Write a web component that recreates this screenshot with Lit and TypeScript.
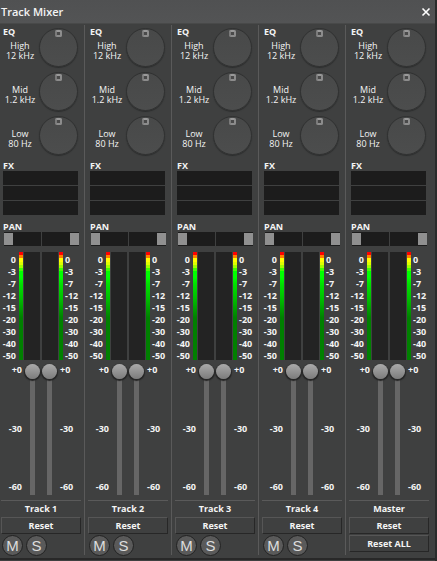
import { LitElement, html, css } from "lit";
import { customElement, property } from "lit/decorators.js";

const METER_LABELS = ["0", "-3", "-7", "-12", "-15", "-20", "-30", "-40", "-50"];
const BANDS = [
  { name: "High", freq: "12 kHz" },
  { name: "Mid", freq: "1.2 kHz" },
  { name: "Low", freq: "80 Hz" },
];

@customElement("mixer-strip")
class MixerStrip extends LitElement {
  @property() name = "";
  @property({ type: Boolean }) master = false;

  static styles = css`
    :host {
      display: flex;
      flex-direction: column;
      box-sizing: border-box;
      padding: 4px 9px 2px 3px;
      position: relative;
      min-width: 0;
    }
    :host(:not([master]))::after {
      content: "";
      position: absolute;
      right: 2px;
      top: 1px;
      bottom: 3px;
      width: 1px;
      background: #5a5a5a;
    }
    * { box-sizing: border-box; }
    input, button { margin: 0; padding: 0; font: inherit; color: inherit; }
    input { appearance: none; background: none; display: block; outline-offset: 1px; }
    h2 { margin: 0; font-size: 9px; line-height: 12px; font-weight: 700; }
    .eq { display: grid; grid-template-columns: 1fr 39px; row-gap: 5px; position: relative; }
    .eq h2 { position: absolute; left: 0; top: -2px; }
    .band { display: contents; }
    .caption { padding: 13px 2px 0 0; height: 39px; text-align: center; font-size: 9px; line-height: 10px; white-space: nowrap; }
    .caption span { display: block; }
    .knob {
      width: 39px; height: 39px; border-radius: 50%;
      background: linear-gradient(#484949, #4c4d4d);
      border: 1px solid #303131;
      box-shadow: 0 1px 1px #2c2d2d;
    }
    .knob::-webkit-slider-runnable-track { height: 37px; }
    .knob::-webkit-slider-thumb {
      appearance: none; width: 7px; height: 7px; margin-top: 1px;
      background: #4a4a4a; border: 2px solid #8c8c8c; border-radius: 2px;
      border-left-color: #7a7a7a; border-top-color: #999;
    }
    .fx { margin-top: 5px; display: flex; flex-direction: column; gap: 1px; }
    .fx h2 { margin-bottom: -2px; }
    .slot { height: 14px; border: 0; background: #1c1c1c; }
    .pan { margin: 6px -1px 0 1px; }
    .pan h2 { margin: 0 0 -1px -1px; }
    .pair { display: grid; grid-template-columns: 1fr 1fr; gap: 1px; }
    .pan input { width: 100%; height: 14px; background: #1c1c1c; }
    .pan input::-webkit-slider-thumb { appearance: none; width: 9px; height: 12px; background: #909090; }
    .meters { margin: 6px -4px 0 -3px; display: grid; grid-template-columns: 1fr auto auto 1fr; column-gap: 2px; }
    .channel { display: grid; grid-template-columns: 4px 16px; column-gap: 1px; }
    .channel.mirror { grid-template-columns: 16px 4px; }
    .bar { background: linear-gradient(#f00 0 3px, #ff8000 3px 6px, #ff0 6px 10px, #e0ff00 10px 13px, #a0ff00 13px 16px, #40ff00 16px 19px, #0f0 19px 25px, #00e000 32px, #00c000 46px, #008000 66px); }
    .well { background: #232323; }
    .scale { font-size: 9px; line-height: 12px; font-weight: 700; padding-top: 2px; height: 108px; }
    .left { text-align: right; padding-right: 1px; }
    .faders { margin: 4px -4px 0 -3px; display: grid; grid-template-columns: 1fr 15px 15px 1fr; column-gap: 2px; height: 131px; }
    .ticks { font-size: 9px; line-height: 12px; font-weight: 700; display: flex; flex-direction: column; justify-content: space-between; padding: 0 1px 2px; }
    .fader { writing-mode: vertical-lr; direction: rtl; width: 15px; height: 131px; }
    .fader::-webkit-slider-runnable-track { width: 5px; background: #666; }
    .fader::-webkit-slider-thumb {
      appearance: none; width: 15px; height: 15px; margin-left: -5px; border-radius: 50%;
      background: linear-gradient(#aaa, #7c7c7c); box-shadow: 0 1px 1px 1px #252525;
    }
    .foot { margin: 5px -3px 0 -2px; border-top: 1px solid #5a5a5a; text-align: center; font-size: 9px; font-weight: 700; }
    .name { line-height: 16px; }
    .reset { display: block; width: 100%; height: 17px; line-height: 14px; background: #3f4040; border: 1px solid #272727; border-top-color: #565656; border-left-color: #565656; }
    .reset + .reset { margin-top: 1px; }
    .toggles { display: flex; gap: 3px; padding: 1px 0 0 1px; }
    .toggle {
      width: 21px; height: 21px; border-radius: 50%; border: 1px solid #222; background: #5a5a5a;
      font: 15px/19px "Liberation Sans", Arial, sans-serif; color: #ddd;
    }
  `;

  render() {
    const scale = METER_LABELS.map((l) => html`<div>${l}</div>`);
    return html`
      <section class="eq">
        <h2>EQ</h2>
        ${BANDS.map((b) => html`<label class="band">
          <span class="caption"><span>${b.name}</span><span>${b.freq}</span></span>
          <input class="knob" type="range" min="-12" max="12" value="0" />
        </label>`)}
      </section>
      <section class="fx">
        <h2>FX</h2>
        ${[1, 2, 3].map((n) => html`<button class="slot" aria-label="Effect slot ${n}"></button>`)}
      </section>
      <section class="pan">
        <h2>PAN</h2>
        <div class="pair">
          <input type="range" aria-label="Pan left" min="0" max="100" value="0" />
          <input type="range" aria-label="Pan right" min="0" max="100" value="100" />
        </div>
      </section>
      <section class="meters">
        <div class="scale left">${scale}</div>
        <div class="channel"><div class="bar"></div><div class="well"></div></div>
        <div class="channel mirror"><div class="well"></div><div class="bar"></div></div>
        <div class="scale">${scale}</div>
      </section>
      <section class="faders">
        <div class="ticks left"><span>+0</span><span>-30</span><span>-60</span></div>
        <input class="fader" type="range" aria-label="Left volume" min="-60" max="0" value="0" />
        <input class="fader" type="range" aria-label="Right volume" min="-60" max="0" value="0" />
        <div class="ticks"><span>+0</span><span>-30</span><span>-60</span></div>
      </section>
      <footer class="foot">
        <div class="name">${this.name}</div>
        <button class="reset">Reset</button>
        ${this.master
          ? html`<button class="reset">Reset ALL</button>`
          : html`<div class="toggles">
              <button class="toggle" aria-label="Mute">M</button>
              <button class="toggle" aria-label="Solo">S</button>
            </div>`}
      </footer>
    `;
  }
}

@customElement("app-root")
class AppRoot extends LitElement {
  static styles = css`
    :host {
      display: block;
      box-sizing: border-box;
      min-height: 100vh;
      background: #3f4040;
      color: #f4f4f4;
      font-family: "Open Sans", "Noto Sans", sans-serif;
      border-right: 2px solid #2a2b2b;
    }
    .title { display: flex; align-items: center; justify-content: space-between; height: 24px; box-sizing: border-box; padding: 0 4px 0 1px; background: linear-gradient(#505152, #535455); border-bottom: 1px solid #484949; }
    h1 { margin: 0; font-size: 11px; font-weight: 600; line-height: 22px; }
    .close { width: 10px; height: 10px; padding: 0; border: 0; background: none; color: #fff; }
    .close svg { display: block; }
    .strips { display: grid; grid-template-columns: repeat(5, 1fr); border-bottom: 2px solid #282828; }
  `;

  render() {
    return html`
      <header class="title">
        <h1>Track Mixer</h1>
        <button class="close" aria-label="Close">
          <svg width="10" height="10" viewBox="0 0 10 10"><path d="M1.5 1.5 8.5 8.5M8.5 1.5 1.5 8.5" stroke="currentColor" stroke-width="1.6" /></svg>
        </button>
      </header>
      <main class="strips">
        ${[1, 2, 3, 4].map((n) => html`<mixer-strip name="Track ${n}"></mixer-strip>`)}
        <mixer-strip name="Master" master></mixer-strip>
      </main>
    `;
  }
}
